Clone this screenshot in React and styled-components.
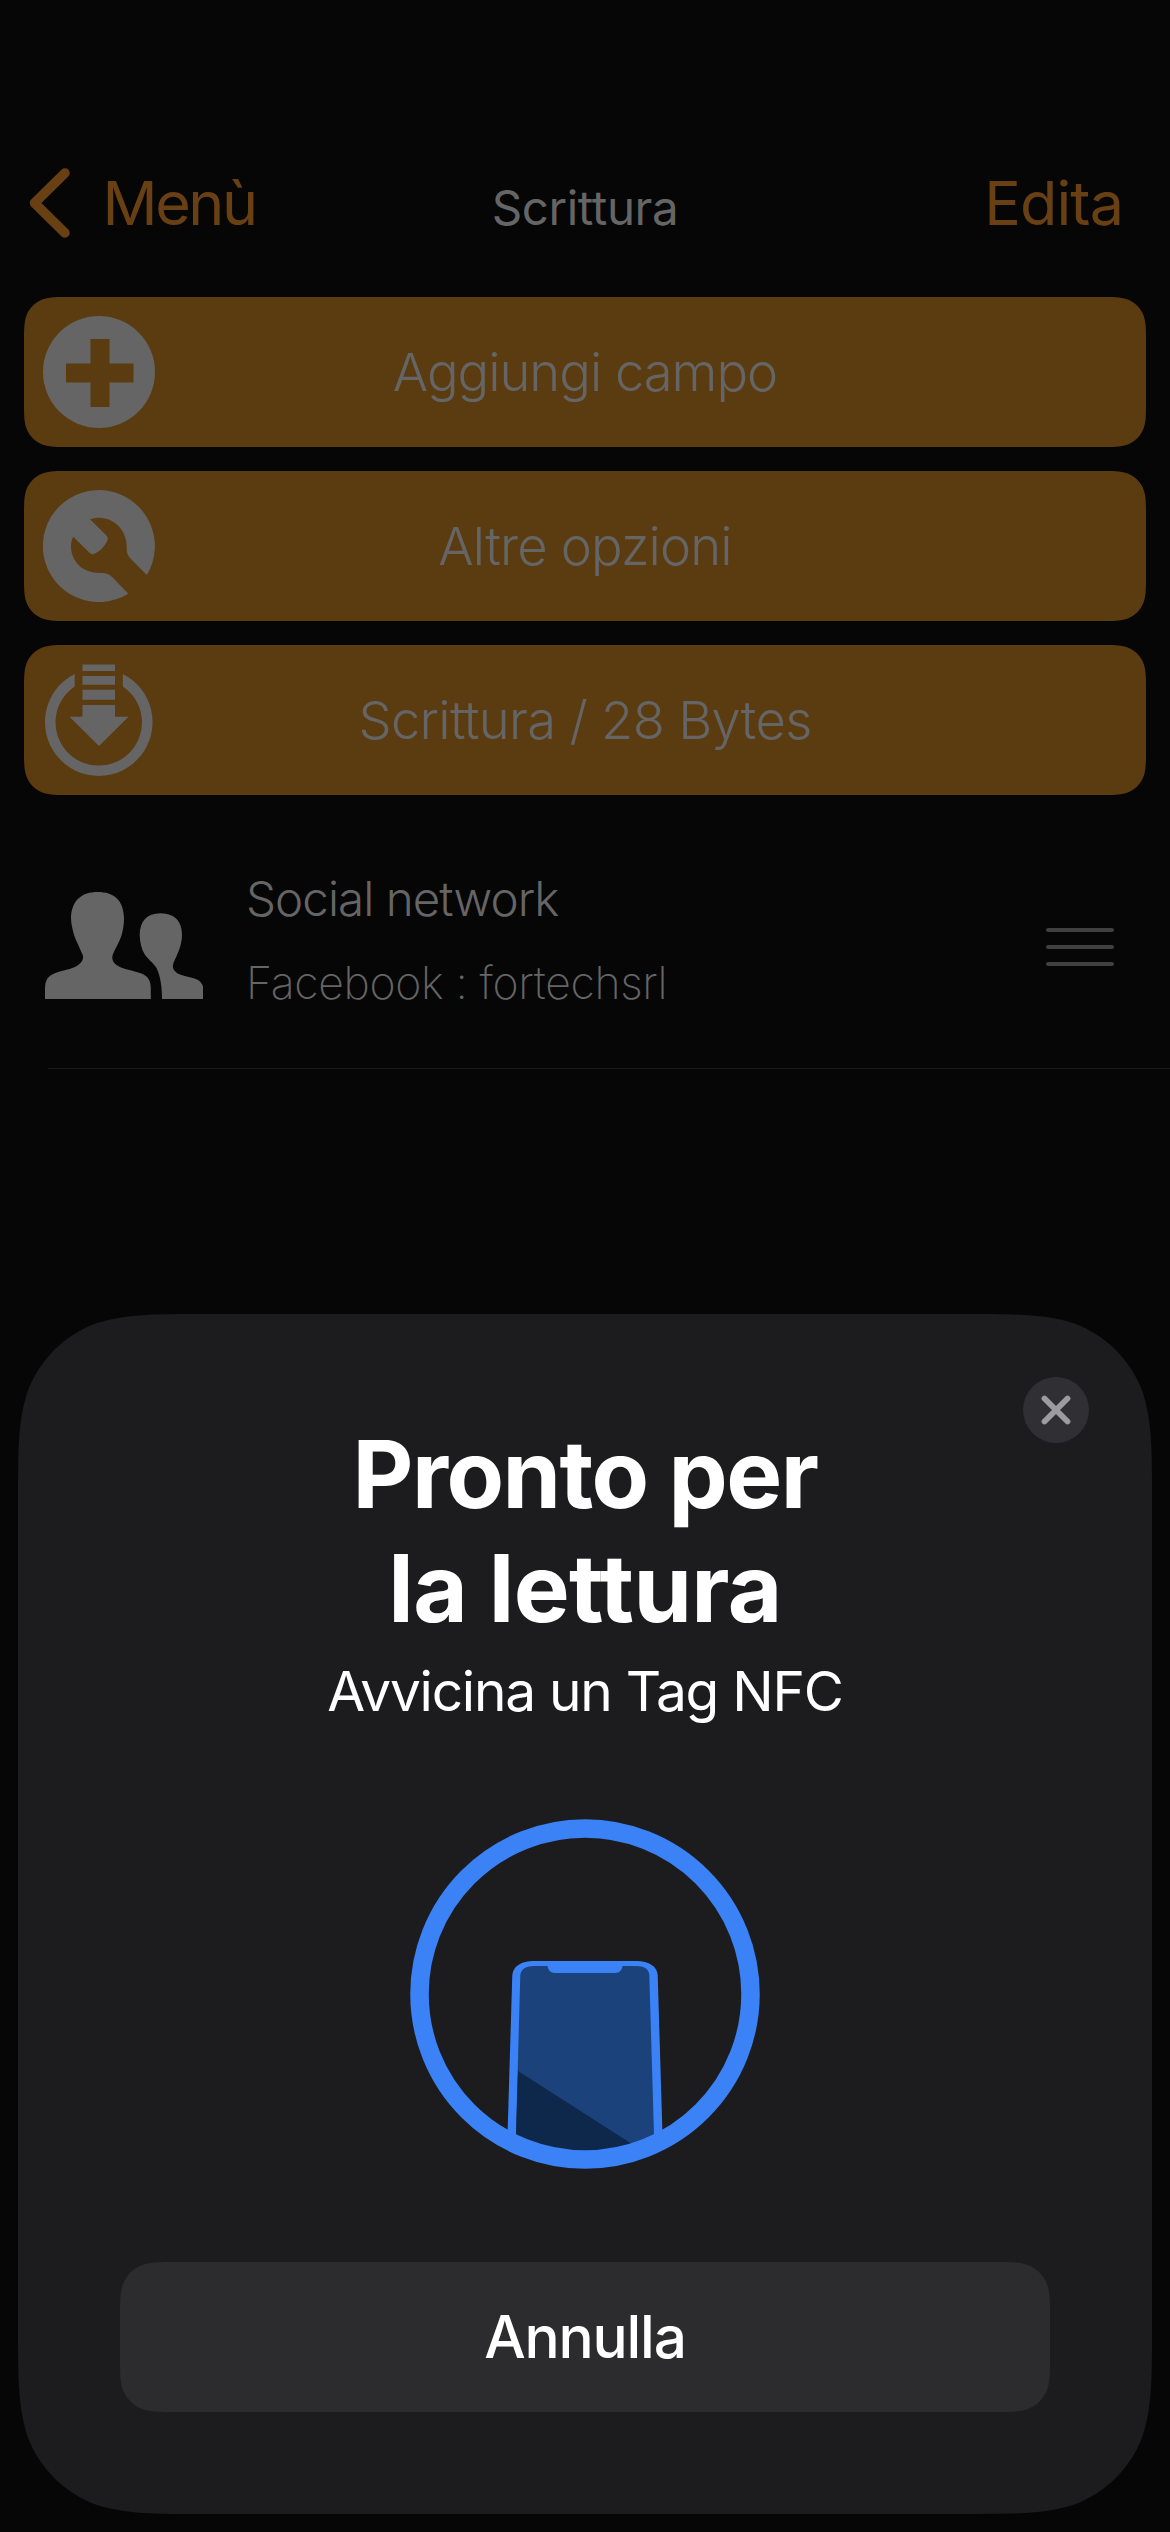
import React from "react";
import styled, { createGlobalStyle } from "styled-components";

const GlobalStyle = createGlobalStyle`
    * {
        box-sizing: border-box;
    }

    body {
        margin: 0;
        background: #060606;
        font-family: Inter, Roboto, "Liberation Sans", sans-serif;
        font-variant-ligatures: none;
    }

    button {
        border: none;
        background: none;
        padding: 0;
        font-family: inherit;
        font-variant-ligatures: inherit;
        cursor: pointer;
    }

    svg {
        display: block;
    }
`;

// iOS style continuous corners
const smoothCorners = (w, h, r) => {
    const corner = [
        [1.5287, 0],
        [1.0885, 0],
        [0.8684, 0],
        [0.6315, 0.0749],
        [0.3728, 0.1691],
        [0.1691, 0.3728],
        [0.0749, 0.6315],
        [0, 0.8684],
        [0, 1.0885],
        [0, 1.5287],
    ];
    const draw = (points, flipX, flipY) => {
        const p = points.map(([x, y]) => {
            const px = flipX ? w - x * r : x * r;
            const py = flipY ? h - y * r : y * r;
            return px.toFixed(2) + " " + py.toFixed(2);
        });
        return `${p[0]} C ${p.slice(1).join(" ")}`;
    };
    const reversed = [...corner].reverse();
    return (
        `path("M ${draw(corner, true, false)} L ${draw(reversed, true, true)} ` +
        `L ${draw(corner, false, true)} L ${draw(reversed, false, false)} Z")`
    );
};

const Screen = styled.div`
    position: relative;
    width: 1170px;
    height: 2532px;
    background: #060606;
    overflow: hidden;
`;

const Header = styled.header`
    display: grid;
    grid-template-columns: 1fr auto 1fr;
    align-items: end;
    height: 297px;
    padding: 163px 29px 54px;
`;

const NavButton = styled.button`
    display: flex;
    align-items: center;
    gap: 32.5px;
    justify-self: ${(props) => props.$side};
    margin-right: ${(props) => (props.$side === "end" ? "18px" : 0)};
    color: #694013;
    font-size: 61px;
    line-height: 80px;
    letter-spacing: ${(props) => props.$spacing}px;
`;

const HeaderTitle = styled.h1`
    margin: 0;
    color: #656565;
    font-size: 47.5px;
    font-weight: 400;
    line-height: 71px;
    letter-spacing: -0.4px;
`;

const Actions = styled.div`
    display: flex;
    flex-direction: column;
    gap: 24px;
    padding: 0 24px;
`;

const ActionButton = styled.button`
    display: grid;
    grid-template-columns: 112px 1fr 112px;
    align-items: center;
    height: 150px;
    padding: 0 19px;
    background: #5b3c11;
    clip-path: ${smoothCorners(1122, 150, 30)};
    color: #656565;
    font-size: 52.5px;
    font-weight: 300;
    letter-spacing: ${(props) => props.$spacing}px;
`;

const Row = styled.div`
    display: flex;
    align-items: flex-start;
    height: 273px;
    padding: 78px 56px 0 44.5px;
`;

const RowIcon = styled.div`
    margin: 19px 43px 0 0;
`;

const RowText = styled.div`
    display: flex;
    flex-direction: column;
    flex: 1;
    gap: 32px;
`;

const RowTitle = styled.div`
    color: #656565;
    font-size: 47.5px;
    font-weight: 300;
    line-height: 52px;
    letter-spacing: -0.94px;
`;

const RowDetail = styled.div`
    color: #656565;
    font-size: 44.5px;
    font-weight: 200;
    line-height: 52px;
    letter-spacing: -0.35px;
`;

const DragHandle = styled.div`
    display: flex;
    flex-direction: column;
    gap: 13px;
    width: 68px;
    margin-top: 55px;
`;

const HandleLine = styled.span`
    height: 4px;
    border-radius: 2px;
    background: #404040;
`;

const Divider = styled.div`
    height: 1px;
    margin-left: 48px;
    background: #191919;
`;

const Sheet = styled.section`
    position: absolute;
    left: 18px;
    bottom: 18px;
    display: flex;
    flex-direction: column;
    align-items: center;
    width: 1134px;
    height: 1200px;
    padding-top: 103px;
    background: #1c1c1e;
    clip-path: ${smoothCorners(1134, 1200, 124)};
    color: #fff;
`;

const CloseButton = styled.button`
    position: absolute;
    top: 63px;
    right: 63px;
    display: flex;
    align-items: center;
    justify-content: center;
    width: 66px;
    height: 66px;
    border-radius: 50%;
    background: #303034;
`;

const SheetTitle = styled.h2`
    display: flex;
    flex-direction: column;
    align-items: center;
    margin: 0;
    font-size: 94px;
    font-weight: 700;
    line-height: 114px;
`;

const TitleLine = styled.span`
    letter-spacing: ${(props) => props.$spacing}px;
`;

const SheetText = styled.p`
    margin: 13px 0 95px;
    font-size: 55px;
    line-height: 66px;
    letter-spacing: -1.25px;
`;

const CancelButton = styled.button`
    width: 930px;
    height: 150px;
    margin-top: 93px;
    padding-bottom: 1px;
    background: #2c2c2e;
    clip-path: ${smoothCorners(930, 150, 36)};
    color: #fff;
    font-size: 58.5px;
    font-weight: 500;
    letter-spacing: -1.2px;
`;

function BackIcon() {
    return (
        <svg width="41" height="70" viewBox="0 0 41 70" fill="none">
            <path
                d="M36 5L5.5 35L36 65"
                stroke="#694013"
                strokeWidth="9.5"
                strokeLinecap="round"
                strokeLinejoin="round"
            />
        </svg>
    );
}

function PlusIcon() {
    return (
        <svg width="112" height="112" viewBox="0 0 112 112" fill="#656565">
            <path
                fillRule="evenodd"
                d="M56 0a56 56 0 1 0 0 112a56 56 0 1 0 0-112ZM47.5 23H66.5V47.5H90.5V66.5H66.5V91H47.5V66.5H23V47.5H47.5Z"
            />
        </svg>
    );
}

function WrenchIcon() {
    return (
        <svg width="112" height="112" viewBox="0 0 112 112" fill="#656565">
            <path d="M103.8 85A56 56 0 1 0 85.3 103.700L69.4 87.3C66 84 63 82.8 55.6 83C39 82.500 28 71 28 56C28 52.500 28.700 49.500 30.200 46.700L46 62.300C48.200 64.500 49.800 64.600 52.500 63.200C57.500 60.500 61 57 63.700 52C65.200 49.200 65.100 47.200 63.200 45.300L47 29.300C50 28.200 53 27.700 56 27.700C71.500 28 83.500 40 83.700 56C83.500 62 84 64.700 87 68Z" />
        </svg>
    );
}

function DownloadIcon() {
    return (
        <svg width="112" height="112" viewBox="0 0 112 112" fill="#656565">
            <path d="M31.7 10A53.8 53.8 0 1 0 79.8 10V22.500A43.200 43.200 0 1 1 31.700 22.500Z" />
            <path d="M39.500 0.500H72V7H39.500ZM39.500 12H72V20.700H39.500ZM39.500 25.700H72V35.700H39.500Z" />
            <path d="M39.500 41H72V52.700H85.500L56 82L26.500 52.700H39.500Z" />
        </svg>
    );
}

function PeopleIcon() {
    return (
        <svg width="158.5" height="107" viewBox="0 0 158.5 107" fill="#656565">
            <path d="M0 107V97C0 88 3 83.500 11 80.700C17 78.500 24 77.500 30 75C36 72 39.500 67.500 37.500 62.500C34 54 30 47 28.500 41C26.500 34 26 29 26 25C27 8 37 0 52.500 0C69 0 78.500 8 79 26C79 33 78 38 76.500 43.500C74 51 70.500 56 67.800 62.500C66 68 69 72.500 76 75.500C83 78.300 90 79 96.500 81.500C103.500 84.500 105.800 89 105.800 97V107Z" />
            <path d="M117 107C117 97 116 85 111.500 76C108.500 71 103 67.500 99.500 62C96.500 57 94.700 50 94.700 43C95 29 101.500 21.500 115.500 21.300C130.500 21.500 137 30 137 43C137 53 132.500 62 128.500 71C126.500 76.500 129.500 80.500 136.500 83C142 85 148 85.500 152 87.500C156.500 89.500 158.500 94 158.500 98V107Z" />
        </svg>
    );
}

function CloseIcon() {
    return (
        <svg width="30" height="30" viewBox="0 0 30 30" fill="none">
            <path
                d="M3.500 3.500L26.500 26.500M26.500 3.500L3.500 26.500"
                stroke="#9b9ba1"
                strokeWidth="5.800"
                strokeLinecap="round"
            />
        </svg>
    );
}

function ScanIcon() {
    return (
        <svg width="350" height="350" viewBox="0 0 350 350">
            <defs>
                <clipPath id="ring">
                    <circle cx="175" cy="175" r="166" />
                </clipPath>
            </defs>
            <g clipPath="url(#ring)">
                <path
                    d="M96.500 350L102.300 156C103 147 112 142 123 142H227C238 142 247 147 247.700 156L253.500 350Z"
                    fill="#3b82f7"
                />
                <path
                    d="M105 350L110.300 156C111 150 116 147 124 147H226C234 147 239 150 239.300 156L245 350Z"
                    fill="#1c427c"
                />
                <path d="M108 252L222 325V350H105Z" fill="#0d284b" />
                <path
                    d="M137.500 146H212.500C212.500 150.500 209.500 154 205 154H145C140.500 154 137.500 150.500 137.500 146Z"
                    fill="#3b82f7"
                />
            </g>
            <circle
                cx="175"
                cy="175"
                r="165.500"
                fill="none"
                stroke="#3b82f7"
                strokeWidth="18.500"
            />
        </svg>
    );
}

const actions = [
    { label: "Aggiungi campo", spacing: -1, Icon: PlusIcon },
    { label: "Altre opzioni", spacing: -0.85, Icon: WrenchIcon },
    { label: "Scrittura / 28 Bytes", spacing: -0.67, Icon: DownloadIcon },
];

function App() {
    return (
        <Screen>
            <GlobalStyle />
            <Header>
                <NavButton $side="start" $spacing={-2.4}>
                    <BackIcon />
                    Menù
                </NavButton>
                <HeaderTitle>Scrittura</HeaderTitle>
                <NavButton $side="end" $spacing={-0.9}>
                    Edita
                </NavButton>
            </Header>
            <Actions>
                {actions.map(({ label, spacing, Icon }) => (
                    <ActionButton key={label} $spacing={spacing}>
                        <Icon />
                        <span>{label}</span>
                    </ActionButton>
                ))}
            </Actions>
            <Row>
                <RowIcon>
                    <PeopleIcon />
                </RowIcon>
                <RowText>
                    <RowTitle>Social network</RowTitle>
                    <RowDetail>Facebook : fortechsrl</RowDetail>
                </RowText>
                <DragHandle>
                    <HandleLine />
                    <HandleLine />
                    <HandleLine />
                </DragHandle>
            </Row>
            <Divider />
            <Sheet>
                <CloseButton aria-label="Chiudi">
                    <CloseIcon />
                </CloseButton>
                <SheetTitle>
                    <TitleLine $spacing={-1.5}>Pronto per</TitleLine>
                    <TitleLine $spacing={-0.6}>la lettura</TitleLine>
                </SheetTitle>
                <SheetText>Avvicina un Tag NFC</SheetText>
                <ScanIcon />
                <CancelButton>Annulla</CancelButton>
            </Sheet>
        </Screen>
    );
}

export default App;
